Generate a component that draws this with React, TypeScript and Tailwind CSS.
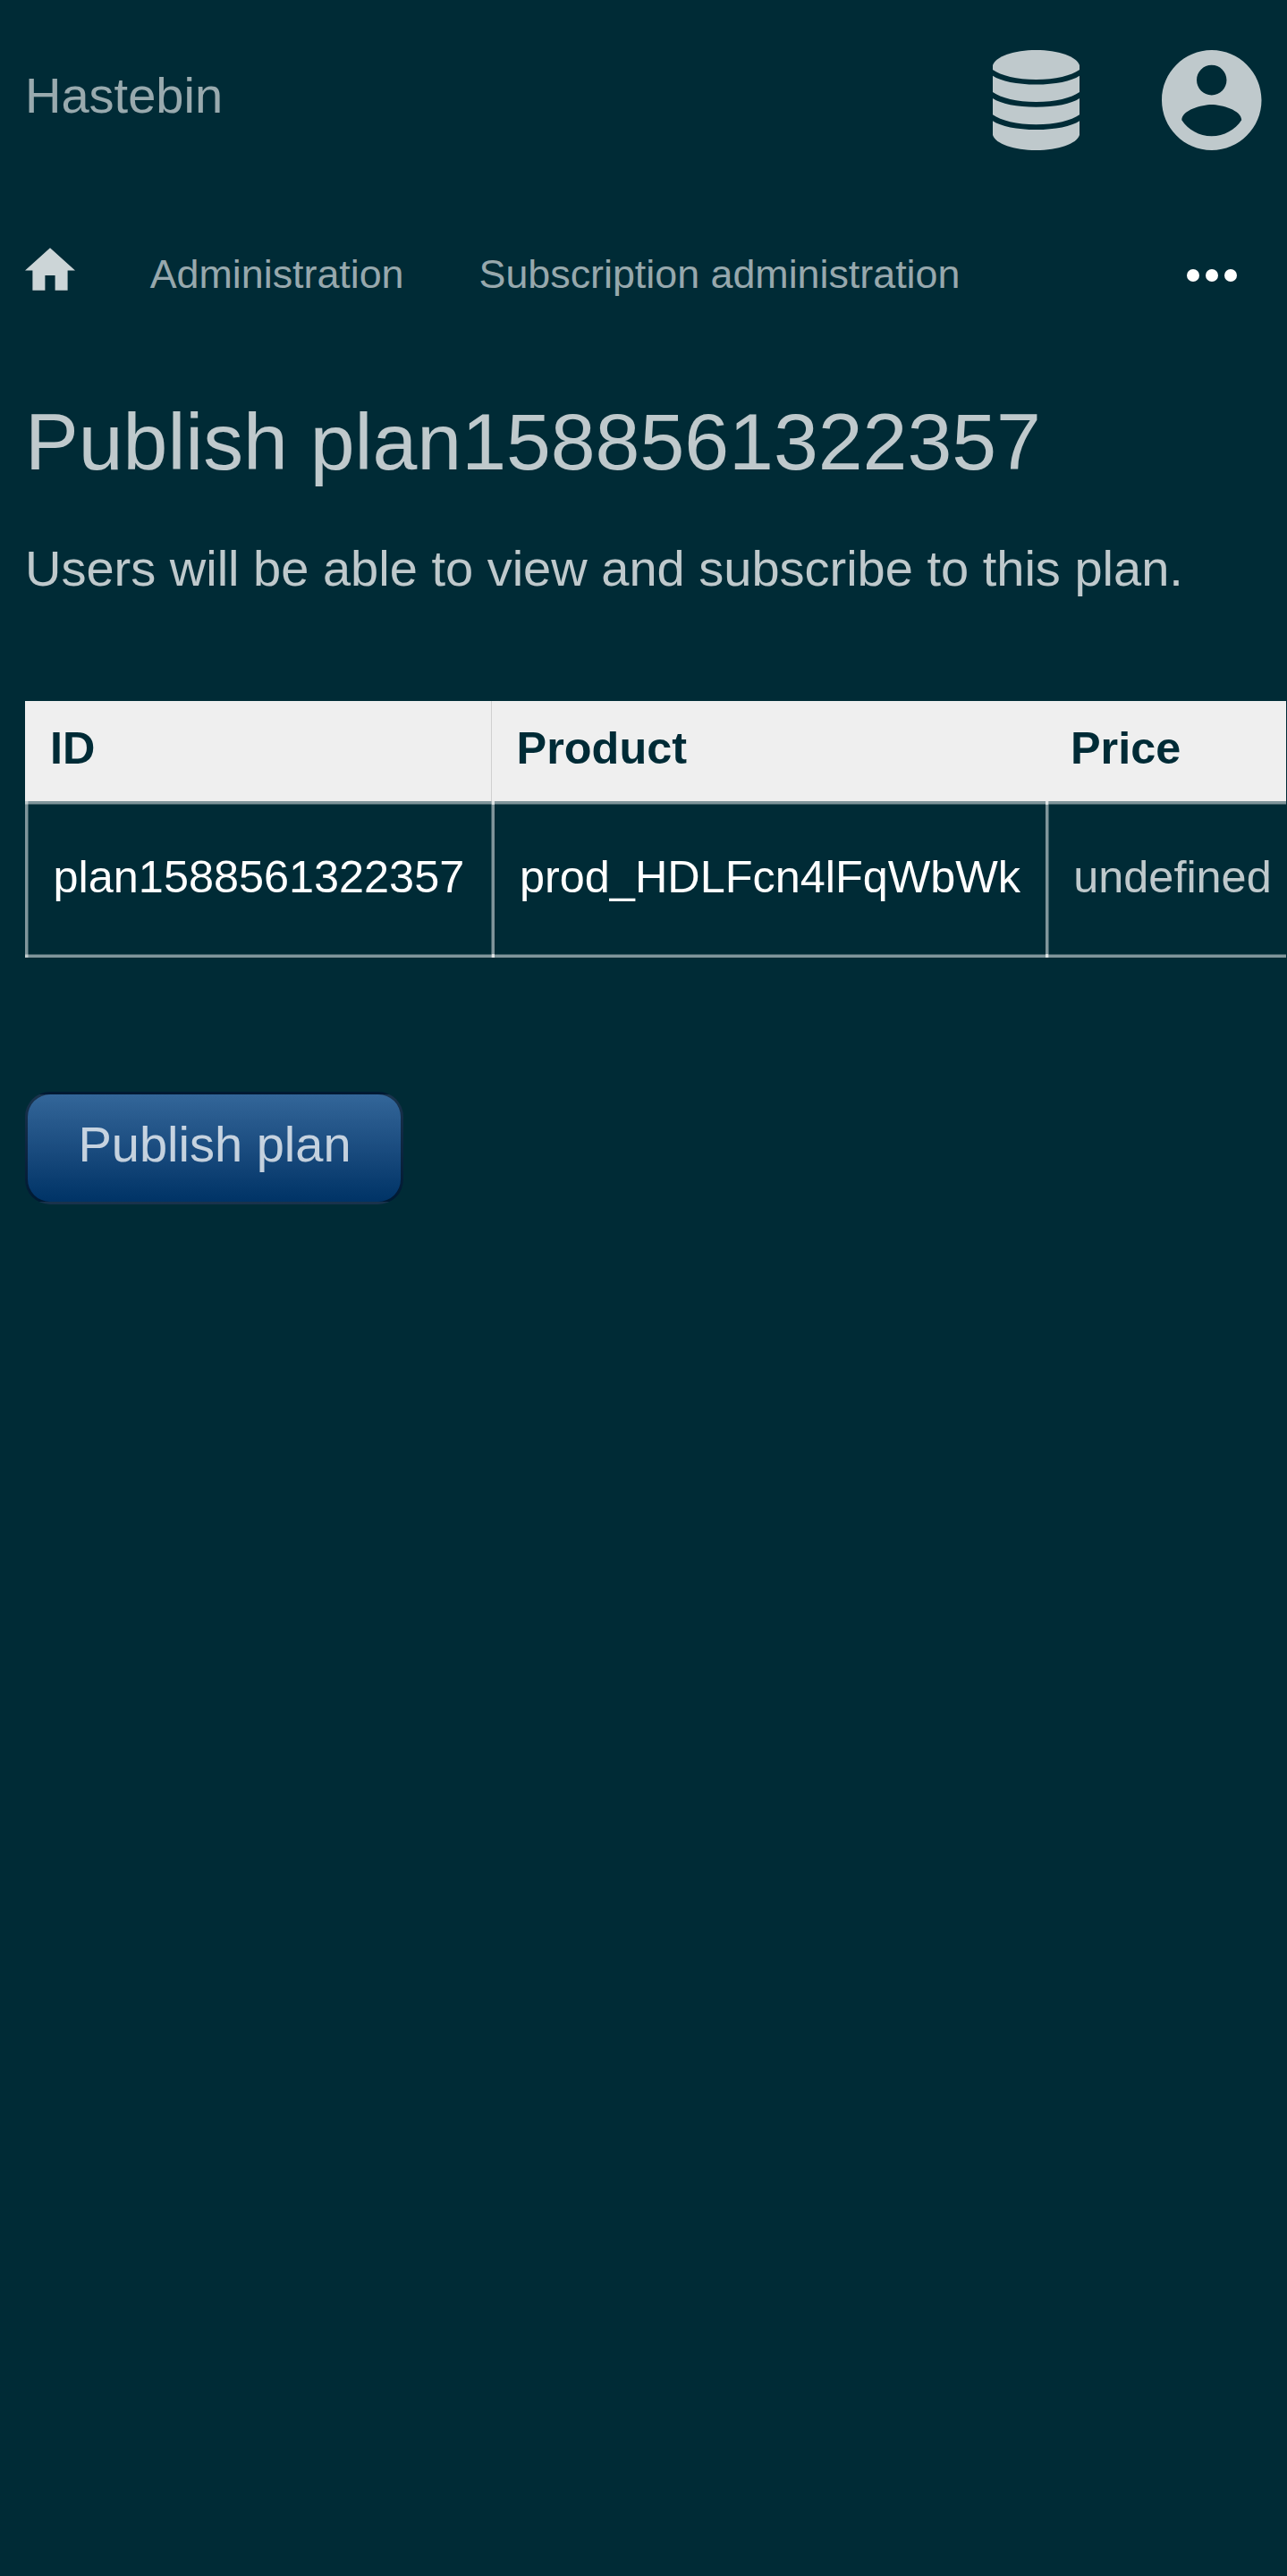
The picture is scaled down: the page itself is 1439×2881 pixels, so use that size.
function DatabaseIcon() {
  return (
    <svg viewBox="0 0 97 112" className="h-[112px] w-[97px]" fill="currentColor">
      <path d="M0 17C3 7 24 0 48.500 0S94 7 97 17V22C88 28.500 70 33 48.500 33S9 28.500 0 22Z" />
      <path d="M0 28.700C9 34.700 27 38.500 48.500 38.500S88 34.700 97 28.700V47C88 53.500 70 58 48.500 58S9 53.500 0 47Z" />
      <path d="M0 54C9 60 27 63.800 48.500 63.800S88 60 97 54V72.200C88 78.700 70 83.200 48.500 83.200S9 78.700 0 72.200Z" />
      <path d="M0 79.200C9 85.200 27 89 48.500 89S88 85.200 97 79.200V95C94 105 73 112 48.500 112S3 105 0 95Z" />
    </svg>
  );
}

function AccountIcon() {
  return (
    <svg viewBox="2 2 20 20" className="h-[112px] w-[111.500px]" preserveAspectRatio="none" fill="currentColor">
      <path d="M12 2C6.480 2 2 6.480 2 12s4.480 10 10 10 10-4.480 10-10S17.520 2 12 2zm0 3c1.660 0 3 1.340 3 3s-1.340 3-3 3-3-1.340-3-3 1.340-3 3-3zm0 14.200c-2.500 0-4.710-1.280-6-3.220.030-1.990 4-3.080 6-3.080 1.990 0 5.970 1.090 6 3.080-1.290 1.940-3.500 3.220-6 3.220z" />
    </svg>
  );
}

function HomeIcon() {
  return (
    <svg viewBox="2 3 20 17" className="-mt-1 h-[48px] w-14 shrink-0 text-white/80" fill="currentColor">
      <path d="M10 20v-6h4v6h5v-8h3L12 3 2 12h3v8z" />
    </svg>
  );
}

// Vertical cell rule; it brightens where it meets the horizontal rules.
function ColumnRule() {
  return (
    <div className="flex w-[3px] shrink-0 flex-col justify-between bg-white/50">
      <span className="h-1 bg-white/50" />
      <span className="h-1 bg-white/50" />
    </div>
  );
}

export default function App() {
  return (
    <div className="h-[2881px] w-full overflow-hidden bg-[#002b36] font-['Liberation_Sans',Arial,sans-serif] text-[56px] leading-[63px] whitespace-nowrap text-white/75">
      <header className="flex h-[224px] items-start justify-between pt-14 pr-[28.5px] pl-7">
        <a className="mt-[19px] text-white/60">Hastebin</a>
        <div className="flex gap-[92px]">
          <DatabaseIcon />
          <AccountIcon />
        </div>
      </header>

      <nav className="flex h-[220px] items-start gap-[84px] pt-[57px] pr-14 pl-7 text-[44.8px] leading-[50px] text-white/60">
        <HomeIcon />
        <a className="-ml-[0.3px]">Administration</a>
        <a>Subscription administration</a>
        <div className="mt-5 ml-auto flex gap-[7px]">
          <span className="size-[14px] rounded-full bg-white" />
          <span className="size-[14px] rounded-full bg-white" />
          <span className="size-[14px] rounded-full bg-white" />
        </div>
      </nav>

      <main className="pl-7">
        <h1 className="text-[89.6px] leading-[100px]">Publish plan1588561322357</h1>
        <p className="mt-[60px]">Users will be able to view and subscribe to this plan.</p>

        <div className="mt-[117px] w-[1410px] overflow-hidden text-[50.4px] leading-[57px]">
          <div className="flex h-28 bg-[#efefef] pt-6 font-bold text-[#002b36]">
            <div className="-mt-6 w-[522px] border-r border-[#d0d0d0] pt-6 pl-7">ID</div>
            <div className="w-[619px] pl-[27.6px]">Product</div>
            <div className="pl-7">Price</div>
          </div>
          <div className="grid h-[175px] grid-cols-1">
            <div className="flex flex-col justify-between [grid-area:1/1]">
              <div className="h-1 border-t-[3px] border-white/50 bg-white/25 bg-clip-padding" />
              <div className="h-1 border-b-[3px] border-white/50 bg-white/25 bg-clip-padding" />
            </div>
            <div className="flex [grid-area:1/1]">
              <div className="w-1 shrink-0 border-l-[3px] border-white/50 bg-white/25 bg-clip-padding" />
              <div className="w-[517px] shrink-0 pt-14 pl-[27.6px] text-white">plan1588561322357</div>
              <div className="w-px shrink-0 bg-white/25" />
              <ColumnRule />
              <div className="w-[616px] shrink-0 pt-14 pl-7 text-white">prod_HDLFcn4lFqWbWk</div>
              <ColumnRule />
              <div className="w-px shrink-0 bg-white/25" />
              <div className="pt-14 pl-[27.3px]">undefined</div>
            </div>
          </div>
        </div>

        <button className="mt-[150px] block h-[126px] w-[423px] rounded-[28px] border-[3px] border-black/50 bg-linear-to-b from-[#336699] to-[#003366] pb-[9px] pl-px text-center">
          Publish plan
        </button>
      </main>
    </div>
  );
}
